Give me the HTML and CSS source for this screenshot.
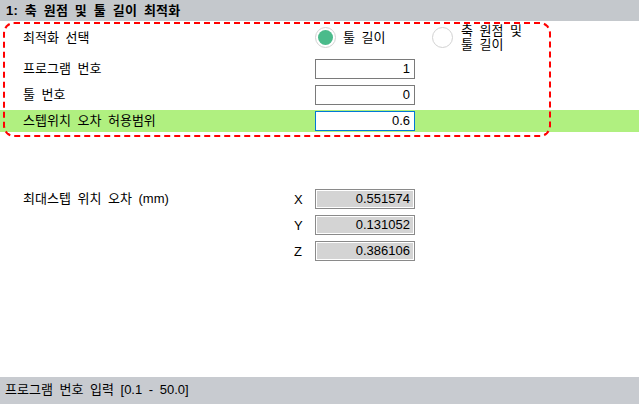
FILE: index.html
```html
<!DOCTYPE html>
<html lang="ko">
<head>
<meta charset="utf-8">
<link rel="stylesheet" href="styles.css">
</head>
<body>
<div class="app">
  <div class="header">1: 축 원점 및 툴 길이 최적화</div>
  <div class="form">
    <div class="dash"></div>
    <div class="row row-select">
      <span class="label">최적화 선택</span>
      <div class="radio-group">
        <div class="radio-item checked"><span class="radio"><span class="dot"></span></span><span class="radio-text">툴 길이</span></div>
        <div class="radio-item"><span class="radio"></span><span class="radio-text">축 원점 및<br>툴 길이</span></div>
      </div>
    </div>
    <div class="row">
      <span class="label">프로그램 번호</span>
      <div class="input">1</div>
    </div>
    <div class="row">
      <span class="label">툴 번호</span>
      <div class="input">0</div>
    </div>
    <div class="row highlight">
      <span class="label">스텝위치 오차 허용범위</span>
      <div class="input focus">0.6</div>
    </div>
  </div>
  <div class="results">
    <span class="label res-label">최대스텝 위치 오차 (mm)</span>
    <div class="axes">
      <div class="axis-row"><span class="axis">X</span><div class="input readonly">0.551574</div></div>
      <div class="axis-row"><span class="axis">Y</span><div class="input readonly">0.131052</div></div>
      <div class="axis-row"><span class="axis">Z</span><div class="input readonly">0.386106</div></div>
    </div>
  </div>
  <div class="status">프로그램 번호 입력 [0.1 - 50.0]</div>
</div>
</body>
</html>
```

FILE: styles.css
```css
* { box-sizing: border-box; }
html, body { margin: 0; padding: 0; background: #fff; }
body {
  font-family: "Liberation Sans", "Noto Sans CJK KR", sans-serif;
  font-size: 13px;
  color: #000;
  word-spacing: 3px;
}
.app {
  width: 639px;
  height: 404px;
  display: flex;
  flex-direction: column;
}
.header {
  height: 21px;
  background: #c4c8cc;
  padding-left: 6px;
  font-weight: bold;
  line-height: 21px;
  letter-spacing: 0.2px;
}
.form {
  position: relative;
  display: flex;
  flex-direction: column;
  gap: 4px;
}
.dash {
  position: absolute;
  left: 3px;
  top: 1px;
  width: 548px;
  height: 115px;
  border: 2px dashed #ff0000;
  border-radius: 11px;
  pointer-events: none;
  z-index: 2;
}
.row {
  display: flex;
  align-items: center;
  height: 22px;
}
.row-select { height: 33px; }
.label {
  width: 315px;
  padding-left: 23px;
  flex: none;
  line-height: 16px;
}
.highlight { background: #b0f080; }
.input {
  width: 100px;
  height: 20px;
  border: 1px solid #7a7a7a;
  background: #fff;
  text-align: right;
  padding-right: 4px;
  line-height: 18px;
  word-spacing: 0;
}
.input.focus { border-color: #0078d7; }
.input.readonly {
  background: #d4d4d4;
  border-color: #8a8a8a;
  box-shadow: inset 0 0 0 1px #fff;
}
.radio-group {
  display: flex;
  align-items: center;
}
.radio-item {
  display: flex;
  align-items: center;
  gap: 7px;
  width: 117px;
}
.radio-item + .radio-item { width: auto; gap: 8px; }
.radio {
  width: 21px;
  height: 21px;
  border-radius: 50%;
  border: 1px solid #d2d2d2;
  background: #fff;
  display: flex;
  align-items: center;
  justify-content: center;
  flex: none;
}
.dot {
  width: 15px;
  height: 15px;
  border-radius: 50%;
  background: #4bbb8b;
}
.radio-text { line-height: 14px; }
.results {
  flex: 1;
  display: flex;
  align-items: flex-start;
  padding-top: 57px;
}
.res-label { margin-top: 2px; width: 294px; }
.axes {
  display: flex;
  flex-direction: column;
  gap: 6px;
}
.axis-row {
  display: flex;
  align-items: center;
}
.axis { width: 21px; }
.status {
  height: 27px;
  background: #c8cbd0;
  padding-left: 5px;
  line-height: 25px;
}
```
